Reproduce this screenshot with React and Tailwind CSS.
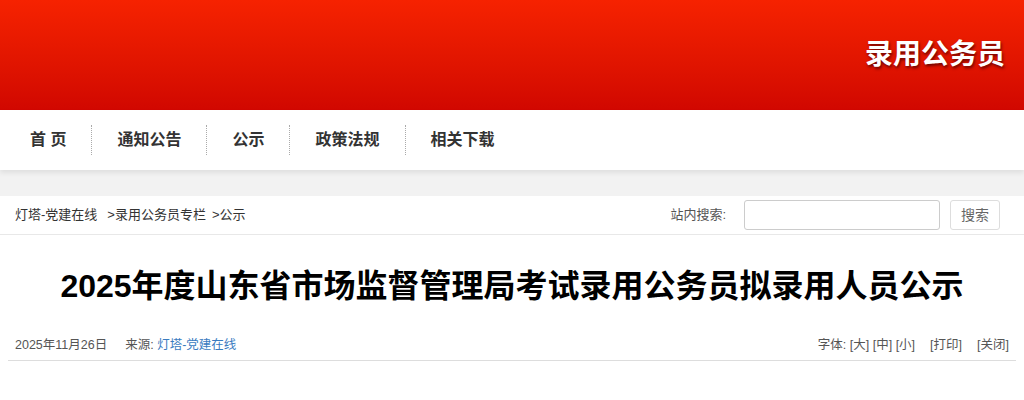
const FONT = { fontFamily: '"Liberation Sans", "Noto Sans CJK SC", sans-serif' };

const navItems = ['首 页', '通知公告', '公示', '政策法规', '相关下载'];

function Header() {
  return (
    <header className="h-[110px] bg-gradient-to-b from-[#f62200] to-[#d10700] flex items-center justify-end pr-[19px]">
      <span className="text-[28px] font-bold text-white [text-shadow:1px_2px_3px_rgba(80,0,0,0.8)]">
        录用公务员
      </span>
    </header>
  );
}

function Nav() {
  return (
    <nav className="h-[60px] bg-white flex items-center pl-[5px] shadow-[0_3px_5px_rgba(0,0,0,0.08)] relative z-10">
      {navItems.map((item, i) => (
        <div key={item} className="flex items-center">
          {i > 0 && <div className="h-[30px] border-l border-dotted border-[#aaa]" />}
          <span className="px-[25px] text-[16px] font-bold text-[#333]">{item}</span>
        </div>
      ))}
    </nav>
  );
}

function Breadcrumb() {
  return (
    <div className="h-[39px] bg-white border-b border-[#e8e8e8] flex items-center justify-between pl-[15px] pr-[24px]">
      <div className="text-[13px] text-[#333]">
        <span>灯塔-党建在线</span>
        <span className="ml-[10px]">&gt;录用公务员专栏</span>
        <span className="ml-[6px]">&gt;公示</span>
      </div>
      <div className="flex items-center text-[13px] text-[#555]">
        <span>站内搜索:</span>
        <input className="ml-[18px] w-[196px] h-[30px] border border-[#ccc] rounded-[3px] outline-none" />
        <button className="ml-[10px] w-[50px] h-[30px] border border-[#ddd] rounded-[3px] text-[14px] text-[#666] bg-white">
          搜索
        </button>
      </div>
    </div>
  );
}

function Article() {
  return (
    <div className="bg-white px-[8px]">
      <h1 className="text-center text-[32px] font-bold text-black pt-[31px] leading-[40px]">
        2025年度山东省市场监督管理局考试录用公务员拟录用人员公示
      </h1>
      <div className="mt-[30px] flex items-center justify-between text-[12.5px] text-[#555] px-[7px] pb-[5px] border-b border-[#ddd]">
        <div>
          <span>2025年11月26日</span>
          <span className="ml-[18px]">来源: </span>
          <span className="text-[#3a7bbf]">灯塔-党建在线</span>
        </div>
        <div>
          字体: [大] [中] [小]<span className="ml-[15px]">[打印]</span>
          <span className="ml-[15px]">[关闭]</span>
        </div>
      </div>
    </div>
  );
}

export default function App() {
  return (
    <div className="w-[1024px] h-[400px] bg-white overflow-hidden" style={FONT}>
      <Header />
      <Nav />
      <div className="h-[26px] bg-[#f2f2f2]" />
      <Breadcrumb />
      <Article />
    </div>
  );
}
